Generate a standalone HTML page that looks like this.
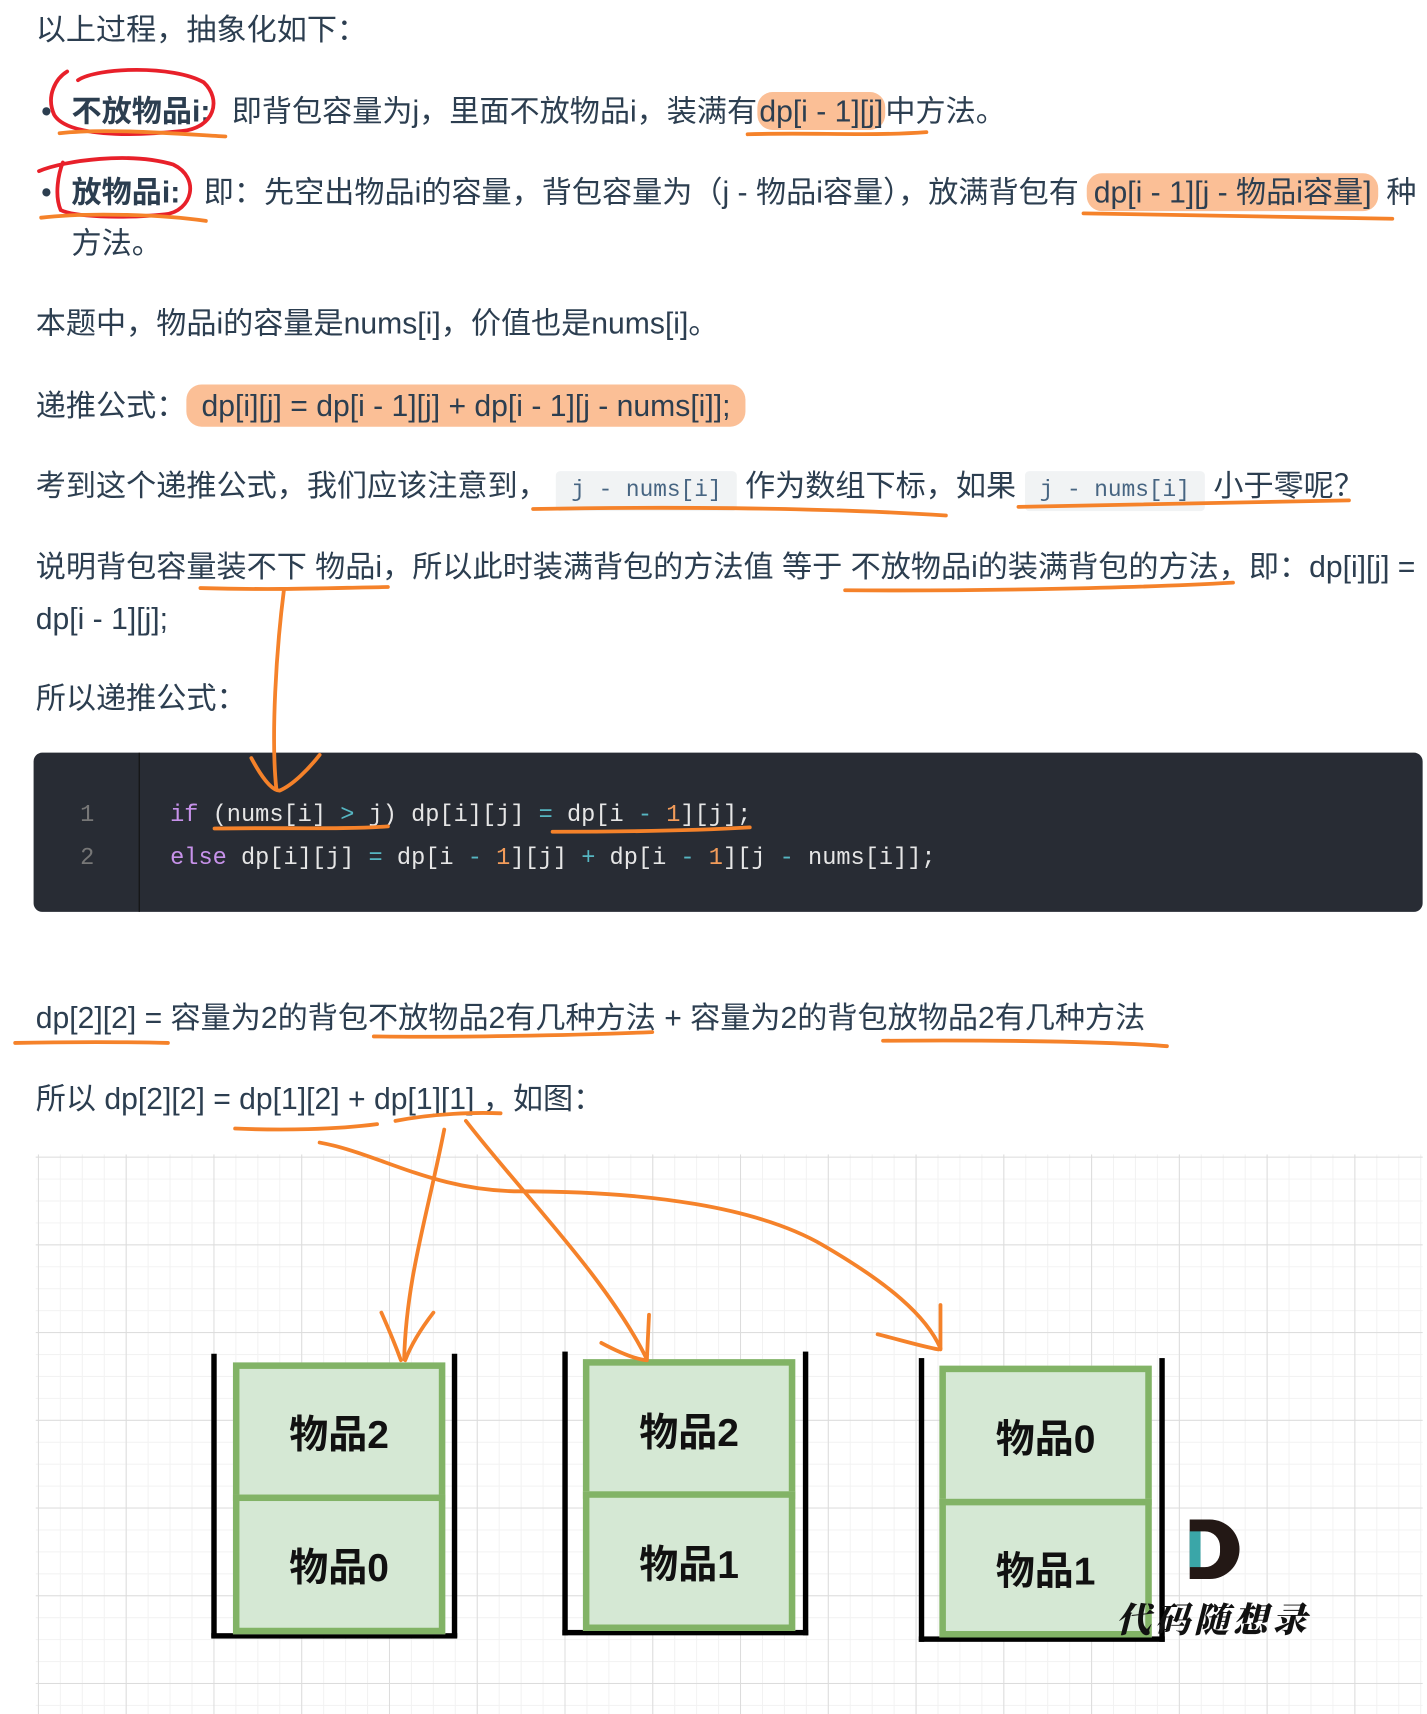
<!DOCTYPE html>
<html><head><meta charset="utf-8"><style>
html,body{margin:0;padding:0;background:#fff;width:1427px;height:1698px;overflow:hidden}
#w{position:absolute;left:0;top:0;width:1330px;height:1583px;transform-origin:0 0;transform:scale(1.0835,1.083);font-family:"Liberation Sans","Noto Sans CJK SC",sans-serif;color:#2c3e50;font-size:27.8px}
.l{position:absolute;white-space:nowrap;line-height:34px;height:34px}
.hl{background:#fbbf96;border-radius:14px;padding:2px 6px}
.ic{font-family:"Liberation Mono","DejaVu Sans Mono",monospace;font-size:21px;background:#f1f3f4;color:#476582;padding:7px 14px;border-radius:4px}
b{font-weight:bold}
.code{position:absolute;left:31px;top:695px;width:1282px;height:147px;background:#282c34;border-radius:8px}
.gut{position:absolute;left:0;top:0;width:97px;height:147px;border-right:1px solid #111}
.cl{position:absolute;font-family:"Liberation Mono","DejaVu Sans Mono",monospace;font-size:21.8px;color:#e6e6e6;white-space:pre;line-height:30px}
.n{color:#777;}
.k{color:#c792ea}.o{color:#56b6c2}.u{color:#f39c5a}
#grid{position:absolute;left:33px;top:1066px;width:1280px;height:517px;
background-image:linear-gradient(#dcdcdc 1px,transparent 1px),linear-gradient(90deg,#dcdcdc 1px,transparent 1px),linear-gradient(#f2f2f2 1px,transparent 1px),linear-gradient(90deg,#f2f2f2 1px,transparent 1px);
background-size:81px 81px,81px 81px,20.25px 20.25px,20.25px 20.25px;background-position:0 2px,2px 0,0 2px,2px 0}
.bar{position:absolute;background:#000}
.gb{position:absolute;background:#d5e8d4;border:6px solid #82b366;box-sizing:border-box;display:flex;align-items:center;justify-content:center;font-size:36px;font-weight:bold;color:#111}
</style></head><body><div id="w">
<div class="l" style="left:33px;top:11px">以上过程，抽象化如下：</div>
<div class="l" style="left:38px;top:86px">•</div>
<div class="l" style="left:66px;top:86px"><b style="margin-right:12px">不放物品i:</b> 即背包容量为j，里面不放物品i，装满有<span class="hl" style="padding:2px 2px">dp[i - 1][j]</span>中方法。</div>
<div class="l" style="left:38px;top:161px">•</div>
<div class="l" style="left:66px;top:161px"><b style="margin-right:14px">放物品i:</b> 即：先空出物品i的容量，背包容量为（j - 物品i容量），放满背包有 <span class="hl">dp[i - 1][j - 物品i容量]</span> 种</div>
<div class="l" style="left:66px;top:208px">方法。</div>
<div class="l" style="left:33px;top:282px">本题中，物品i的容量是nums[i]，价值也是nums[i]。</div>
<div class="l" style="left:33px;top:358px">递推公式：<span class="hl" style="padding:4px 14px">dp[i][j] = dp[i - 1][j] + dp[i - 1][j - nums[i]];</span></div>
<div class="l" style="left:33px;top:432px">考到这个递推公式，我们应该注意到， <span class="ic">j - nums[i]</span> 作为数组下标，如果 <span class="ic">j - nums[i]</span> 小于零呢？</div>
<div class="l" style="left:33px;top:507px">说明背包容量装不下 物品i，所以此时装满背包的方法值 等于 不放物品i的装满背包的方法，即：dp[i][j] =</div>
<div class="l" style="left:33px;top:555px">dp[i - 1][j];</div>
<div class="l" style="left:33px;top:628px">所以递推公式：</div>
<div class="code"><div class="gut"></div>
<div class="cl n" style="left:43px;top:43px">1</div>
<div class="cl n" style="left:43px;top:83px">2</div>
<div class="cl" style="left:126px;top:43px"><span class="k">if</span> (nums[i] <span class="o">&gt;</span> j) dp[i][j] <span class="o">=</span> dp[i <span class="o">-</span> <span class="u">1</span>][j];</div>
<div class="cl" style="left:126px;top:83px"><span class="k">else</span> dp[i][j] <span class="o">=</span> dp[i <span class="o">-</span> <span class="u">1</span>][j] <span class="o">+</span> dp[i <span class="o">-</span> <span class="u">1</span>][j <span class="o">-</span> nums[i]];</div>
</div>
<div class="l" style="left:33px;top:923px">dp[2][2] = 容量为2的背包不放物品2有几种方法 + 容量为2的背包放物品2有几种方法</div>
<div class="l" style="left:33px;top:998px">所以 dp[2][2] = dp[1][2] + dp[1][1] ，如图：</div>
<div id="grid"></div>
<div class="bar" style="left:195px;top:1250px;width:5px;height:262px"></div>
<div class="bar" style="left:417px;top:1250px;width:5px;height:262px"></div>
<div class="bar" style="left:195px;top:1508px;width:227px;height:5px"></div>
<div class="gb" style="left:215px;top:1258px;width:196px;height:128px">物品2</div>
<div class="gb" style="left:215px;top:1380px;width:196px;height:129px">物品0</div>
<div class="bar" style="left:519px;top:1248px;width:5px;height:262px"></div>
<div class="bar" style="left:741px;top:1248px;width:5px;height:262px"></div>
<div class="bar" style="left:519px;top:1505px;width:227px;height:5px"></div>
<div class="gb" style="left:538px;top:1255px;width:196px;height:129px">物品2</div>
<div class="gb" style="left:538px;top:1377px;width:196px;height:129px">物品1</div>
<div class="bar" style="left:848px;top:1254px;width:5px;height:262px"></div>
<div class="bar" style="left:1070px;top:1254px;width:5px;height:262px"></div>
<div class="bar" style="left:848px;top:1511px;width:227px;height:5px"></div>
<div class="gb" style="left:867px;top:1261px;width:196px;height:129px">物品0</div>
<div class="gb" style="left:867px;top:1384px;width:196px;height:128px">物品1</div>
<div style="position:absolute;left:1098px;top:1403px;width:46px;height:55px;background:#231815;border-radius:0 28px 28px 0"></div>
<div style="position:absolute;left:1108px;top:1414px;width:18px;height:33px;background:#fff;border-radius:0 14px 14px 0"></div>
<div style="position:absolute;left:1098px;top:1414px;width:10px;height:33px;background:#3aa6a8"></div>
<div class="l" style="left:1030px;top:1477px;font-family:'Noto Serif CJK SC',serif;font-weight:900;font-style:italic;font-size:32px;letter-spacing:4px;color:#111">代码随想录</div>
<svg style="position:absolute;left:0;top:0" width="1330" height="1583" viewBox="0 0 1330 1583" fill="none" stroke-linecap="round">
<g stroke="#e8202a" stroke-width="3.5">
<path d="M72,74 C90,62 160,60 188,76 C205,92 198,118 168,121 C120,126 62,126 50,106 C42,88 52,72 62,66"/>
<path d="M36,158 C60,148 120,140 160,152 C185,164 178,195 152,198 C110,202 68,200 56,194 C50,180 54,160 58,150"/>
</g>
<g stroke="#f5822a" stroke-width="3.5">
<path d="M55,123 C100,118 170,124 208,126"/>
<path d="M38,201 C80,196 150,198 190,204"/>
<path d="M690,124 C750,122 800,126 855,122"/>
<path d="M1000,197 C1100,199 1200,200 1285,202"/>
<path d="M492,470 C600,468 750,468 873,476"/>
<path d="M940,468 C1050,466 1150,463 1245,462"/>
<path d="M185,543 C260,545 300,543 358,542"/>
<path d="M780,545 C900,546 1050,543 1138,538"/>
<path d="M262,545 C255,600 250,680 255,728"/>
<path d="M232,700 C240,715 250,730 258,730 C270,725 285,710 295,697"/>
<path d="M198,765 C260,764 320,766 358,763"/>
<path d="M510,768 C580,768 640,767 692,764"/>
<path d="M14,963 C60,962 120,962 155,963"/>
<path d="M345,957 C420,958 530,956 602,953"/>
<path d="M815,961 C920,960 1030,962 1077,966"/>
<path d="M217,1042 C260,1044 310,1043 348,1038"/>
<path d="M365,1035 C400,1028 440,1027 462,1028"/>
<path d="M410,1043 C395,1120 375,1180 373,1255"/>
<path d="M352,1212 C360,1230 366,1245 370,1256 M374,1256 C380,1240 390,1225 400,1212"/>
<path d="M430,1035 C480,1100 560,1180 597,1255"/>
<path d="M555,1240 C570,1248 585,1255 597,1256 M597,1256 L599,1214"/>
<path d="M295,1055 C350,1065 400,1100 480,1100 C600,1100 700,1115 760,1150 C820,1185 855,1215 868,1245"/>
<path d="M810,1232 C830,1237 850,1243 866,1246 M868,1246 L868,1205"/>
</g>
</svg>
</div></body></html>
